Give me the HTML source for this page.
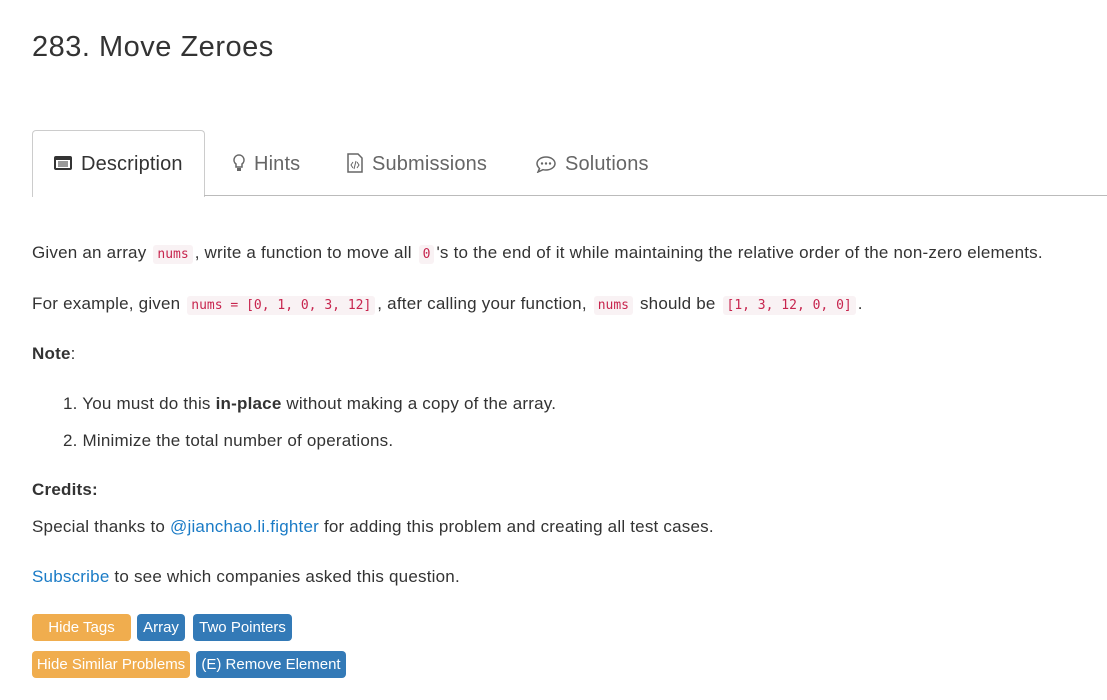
<!DOCTYPE html>
<html><head><style>
body{margin:0;width:1107px;height:700px;background:#fff;font-family:"Liberation Sans",sans-serif;color:#333;position:relative;overflow:hidden}
.a{position:absolute;white-space:nowrap}
.t{font-size:17px;line-height:20px;letter-spacing:0.21px}
code{font-family:"DejaVu Sans Mono","Liberation Mono",monospace;font-size:13px;letter-spacing:0;color:#c7254e;background:#f9f2f4;padding:2px 4px;border-radius:3px;margin:0 2px}
.lnk{color:#1a7bc6}
.b{position:absolute;height:27px;line-height:28px;color:#fff;font-size:15px;border-radius:4px;text-align:center}
.o{background:#f0ad4e}.bl{background:#337ab7}
.tab{position:absolute;top:151px;font-size:20px;color:#666;line-height:26px;letter-spacing:0.15px}
.tab svg{margin-right:8px}
</style></head><body>
<div class="a" style="left:32px;top:29px;font-size:29px;line-height:36px;color:#333;letter-spacing:0.5px">283. Move Zeroes</div>
<div style="position:absolute;left:32px;top:130px;width:171px;height:66px;border:1px solid #ccc;border-bottom:none;border-radius:4px 4px 0 0;background:#fff"></div>
<div style="position:absolute;left:204px;top:195px;width:903px;height:1px;background:#bbb"></div>
<div class="tab" style="left:53px;color:#333">
<svg width="20" height="16" viewBox="0 0 20 16" style="vertical-align:-1px"><rect x="1" y="1" width="18" height="14" rx="2" fill="#333"/><rect x="3" y="5" width="14" height="8" fill="#fff"/><path d="M5 7h10M5 9h10M5 11h10" stroke="#333" stroke-width="1"/></svg>Description</div>
<div class="tab" style="left:232px"><svg width="14" height="18" viewBox="0 0 14 18" style="vertical-align:-2px"><path d="M7 1a5 5 0 0 0-3 9v3h6v-3a5 5 0 0 0-3-9z" fill="none" stroke="#666" stroke-width="1.5"/><rect x="5" y="14" width="4" height="3" fill="#666"/></svg>Hints</div>
<div class="tab" style="left:346px"><svg width="18" height="20" viewBox="0 0 18 20" style="vertical-align:-3px"><path d="M2 1h10l4 4v14H2z" fill="none" stroke="#666" stroke-width="1.5"/><path d="M7 9l-2 3 2 3M11 9l2 3-2 3M10 8l-2 8" fill="none" stroke="#666"/></svg>Submissions</div>
<div class="tab" style="left:535px"><svg width="22" height="18" viewBox="0 0 22 18" style="vertical-align:-3px"><path d="M11 2c5 0 9 3 9 6.5S16 15 11 15c-1 0-2 0-3-.3L3 17l1.5-3.5C3 12 2 10.5 2 8.5 2 5 6 2 11 2z" fill="none" stroke="#666" stroke-width="1.5"/><circle cx="7" cy="8.5" r="1.2" fill="#666"/><circle cx="11" cy="8.5" r="1.2" fill="#666"/><circle cx="15" cy="8.5" r="1.2" fill="#666"/></svg>Solutions</div>
<div class="a t" style="left:32px;top:243px">Given an array <code>nums</code>, write a function to move all <code>0</code>'s to the end of it while maintaining the relative order of the non-zero elements.</div>
<div class="a t" style="left:32px;top:294px">For example, given <code>nums = [0, 1, 0, 3, 12]</code>, after calling your function, <code>nums</code> should be <code>[1, 3, 12, 0, 0]</code>.</div>
<div class="a t" style="left:32px;top:344px"><b>Note</b>:</div>
<div class="a t" style="left:63px;top:394px">1. You must do this <b>in-place</b> without making a copy of the array.</div>
<div class="a t" style="left:63px;top:431px">2. Minimize the total number of operations.</div>
<div class="a t" style="left:32px;top:480px"><b>Credits:</b></div>
<div class="a t" style="left:32px;top:517px">Special thanks to <span class="lnk">@jianchao.li.fighter</span> for adding this problem and creating all test cases.</div>
<div class="a t" style="left:32px;top:567px"><span class="lnk">Subscribe</span> to see which companies asked this question.</div>
<div class="b o" style="left:32px;top:614px;width:99px">Hide Tags</div>
<div class="b bl" style="left:137px;top:614px;width:48px">Array</div>
<div class="b bl" style="left:193px;top:614px;width:99px">Two Pointers</div>
<div class="b o" style="left:32px;top:651px;width:158px">Hide Similar Problems</div>
<div class="b bl" style="left:196px;top:651px;width:150px">(E) Remove Element</div>
</body></html>
